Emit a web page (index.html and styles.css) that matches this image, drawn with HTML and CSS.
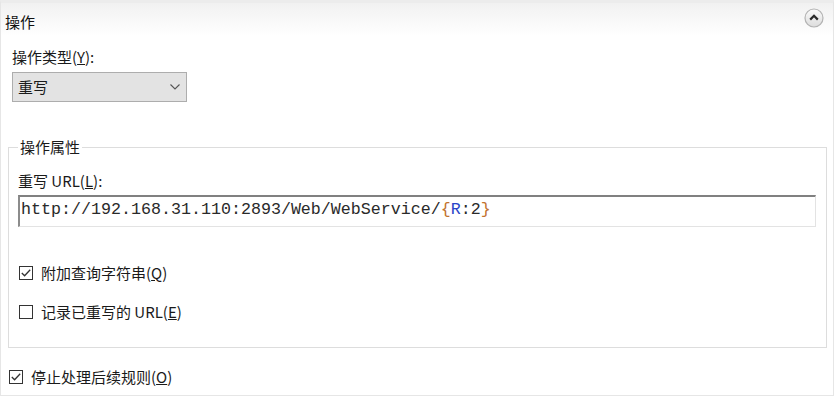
FILE: index.html
```html
<!DOCTYPE html>
<html lang="zh-CN">
<head>
<meta charset="utf-8">
<title>操作</title>
<link rel="stylesheet" href="styles.css">
</head>
<body>
<div class="panel">
  <div class="header">
    <span class="title">操作</span>
    <svg class="collapse" width="20" height="20" viewBox="0 0 20 20">
      <defs>
        <linearGradient id="cg" x1="0" y1="0" x2="0" y2="1">
          <stop offset="0" stop-color="#fbfbfb"/>
          <stop offset="1" stop-color="#dcdcdc"/>
        </linearGradient>
      </defs>
      <circle cx="10" cy="10" r="9" fill="url(#cg)" stroke="#b3b3b3" stroke-width="1.2"/>
      <path d="M6.2 11.6 L10 7.8 L13.8 11.6" fill="none" stroke="#2b2b2b" stroke-width="2.2" stroke-linejoin="miter"/>
    </svg>
  </div>
  <div class="content">
    <div class="label">操作类型(<u>Y</u>):</div>
    <div class="select">
      <span>重写</span>
      <svg width="10" height="6" viewBox="0 0 10 6"><path d="M0.5 0.5 L5 5 L9.5 0.5" fill="none" stroke="#555" stroke-width="1.1"/></svg>
    </div>
    <fieldset class="group">
      <legend>操作属性</legend>
      <div class="label">重写 URL(<u>L</u>):</div>
      <div class="input">http://192.168.31.110:2893/Web/WebService/<span class="brace">{</span><span class="var">R</span>:2<span class="brace">}</span></div>
      <div class="check first">
        <span class="box checked"><svg width="14" height="14" viewBox="0 0 14 14"><path d="M2.8 7 L5.6 9.8 L11.2 3.8" fill="none" stroke="#333" stroke-width="1.3"/></svg></span>
        <span>附加查询字符串(<u>Q</u>)</span>
      </div>
      <div class="check second">
        <span class="box"></span>
        <span>记录已重写的 URL(<u>E</u>)</span>
      </div>
    </fieldset>
    <div class="check stop">
      <span class="box checked"><svg width="14" height="14" viewBox="0 0 14 14"><path d="M2.8 7 L5.6 9.8 L11.2 3.8" fill="none" stroke="#333" stroke-width="1.3"/></svg></span>
      <span>停止处理后续规则(<u>O</u>)</span>
    </div>
  </div>
</div>
</body>
</html>
```

FILE: styles.css
```css
html, body {
  margin: 0;
  padding: 0;
  background: #ffffff;
}
body {
  font-family: "Noto Sans CJK SC", "Noto Sans", sans-serif;
  font-size: 15px;
  color: #1a1a1a;
}
.panel {
  width: 832px;
  height: 392px;
  border: 1px solid #e6e6e6;
  border-top: 3px solid #ececec;
  background: #fff;
}
.header {
  height: 33px;
  display: flex;
  align-items: flex-start;
  padding: 0 9px 0 4px;
  background: linear-gradient(#f1f1f1, #ffffff);
}
.title {
  line-height: 20px;
  margin-top: 9px;
  color: #111;
}
.collapse {
  margin-left: auto;
  margin-top: 5px;
}
.content {
  padding: 0 6px 0 7px;
}
.label {
  line-height: 20px;
  padding-left: 4px;
}
.content > .label {
  margin-top: 11px;
}
.select {
  margin: 5px 0 0 4px;
  width: 162px;
  height: 28px;
  border: 1px solid #adadad;
  background: #e3e3e3;
  display: flex;
  align-items: center;
  justify-content: space-between;
  padding: 0 6px 0 5px;
  box-sizing: content-box;
}
.select span {
  line-height: 20px;
}
.group {
  margin: 35px 0 0 0;
  padding: 14px 10px 0 9px;
  border: 1px solid #dddddd;
  height: 211px;
  box-sizing: border-box;
}
.group legend {
  padding: 0 2px;
  margin-left: 0;
  line-height: 20px;
}
.group .label {
  padding-left: 0;
  margin-top: 0;
  line-height: 20px;
}
.input {
  margin-top: 4px;
  height: 32px;
  box-sizing: border-box;
  border-top: 2px solid #808080;
  border-left: 2px solid #8c8c8c;
  border-right: 1px solid #e3e3e3;
  border-bottom: 1px solid #e3e3e3;
  padding: 3px 0 0 1px;
  font-family: "Liberation Mono", monospace;
  font-size: 16.67px;
  line-height: 20px;
  color: #2a2a2a;
  white-space: nowrap;
}
.brace {
  color: #c2722e;
}
.var {
  color: #2a45c9;
}
.check {
  display: flex;
  align-items: center;
  line-height: 20px;
}
.box {
  width: 14px;
  height: 14px;
  border: 1px solid #333;
  background: #fff;
  margin-right: 8px;
  display: inline-block;
  box-sizing: border-box;
  position: relative;
}
.box svg {
  position: absolute;
  left: -1px;
  top: -1px;
}
.check.first {
  margin-top: 36px;
  padding-left: 1px;
}
.check.second {
  margin-top: 19px;
  padding-left: 1px;
}
.check.stop {
  margin-top: 19px;
  padding-left: 1px;
}
```
